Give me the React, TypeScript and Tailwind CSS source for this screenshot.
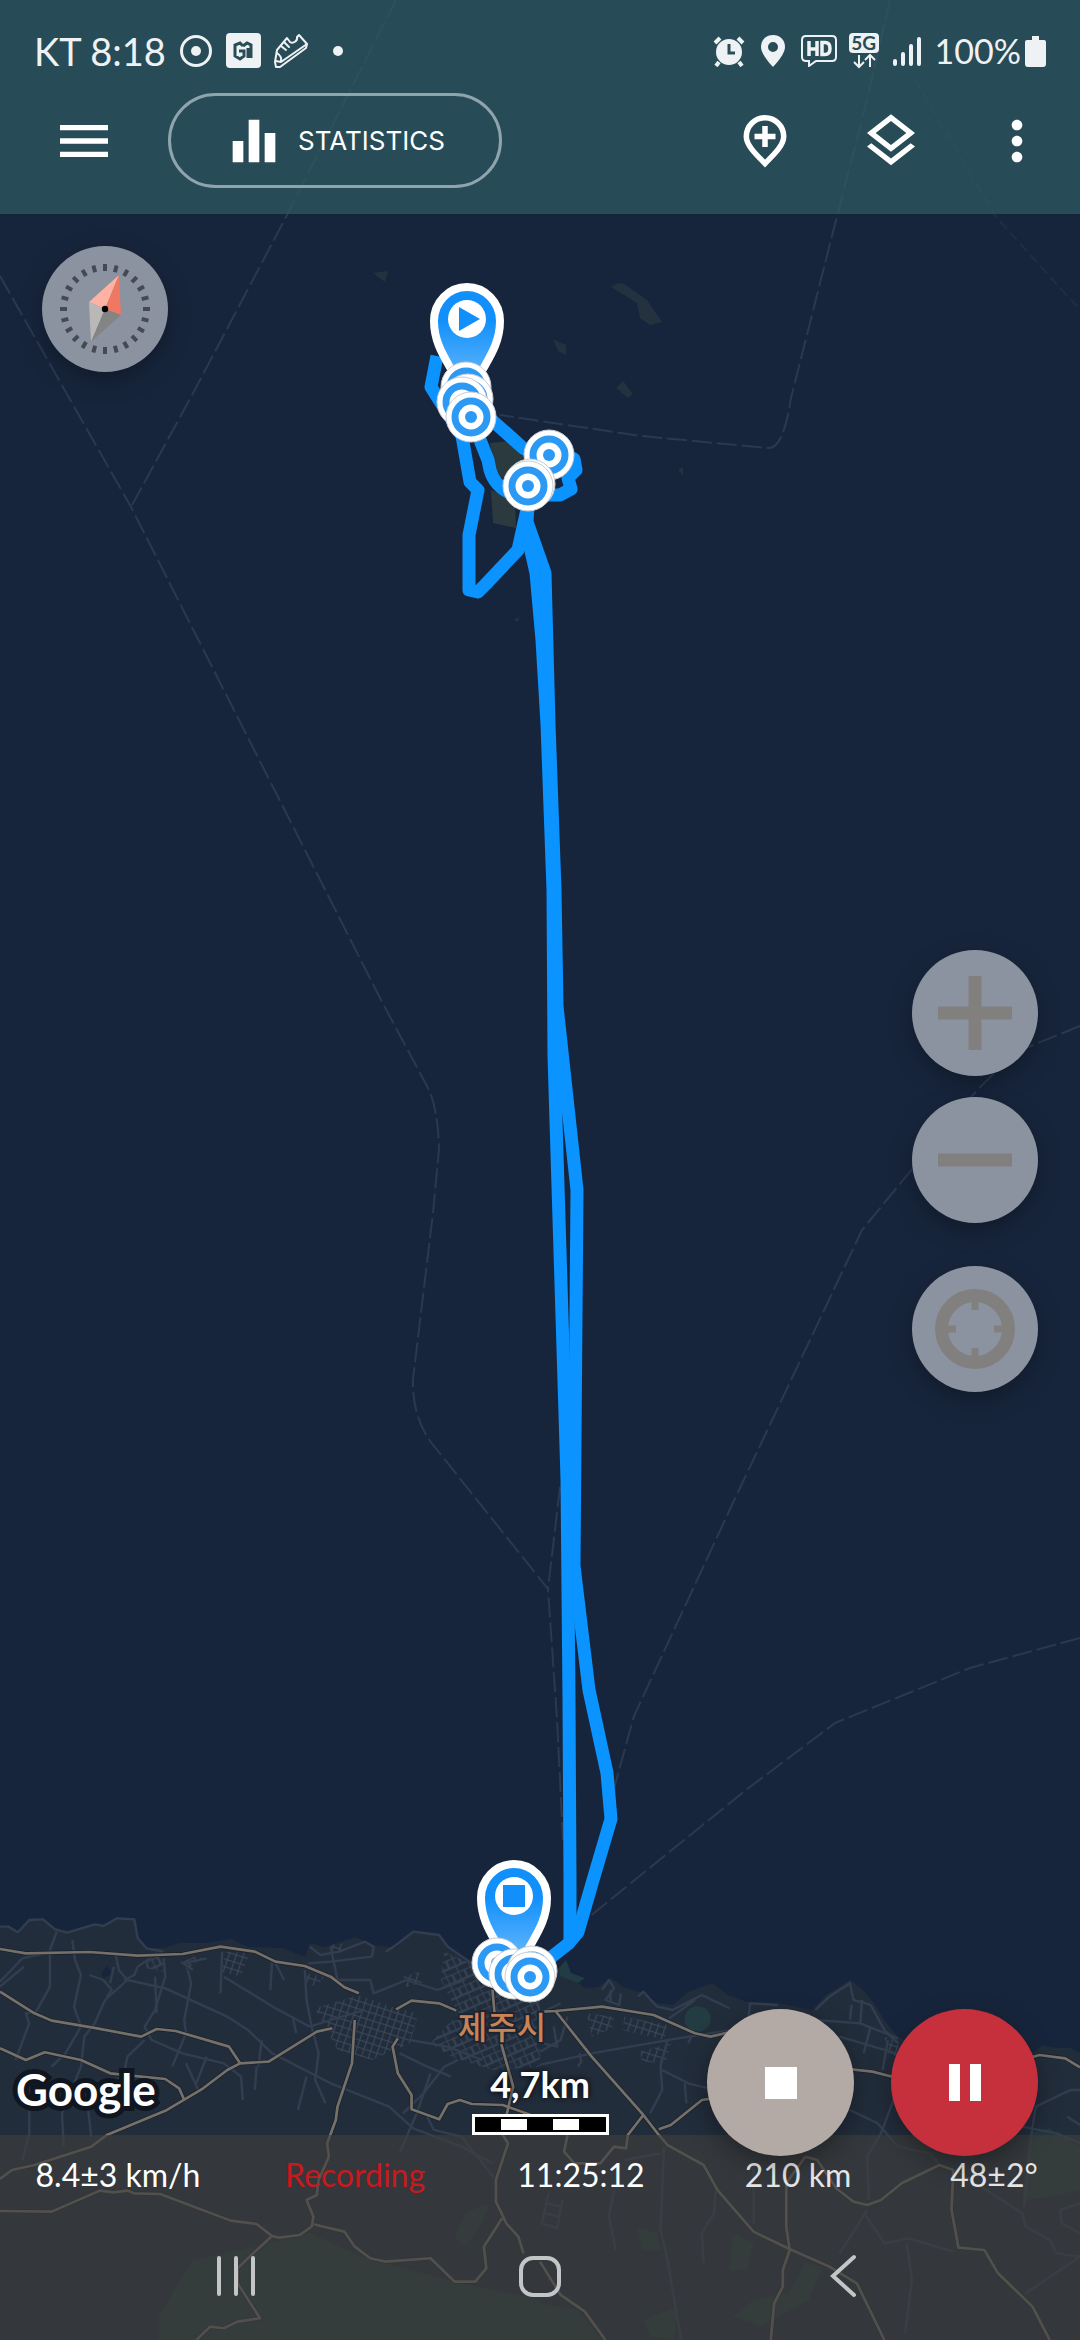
/**
 * Track recorder screen
 * Night map with the recorded route, floating map controls and live stats
 */

import React from 'react';
import { MdEqualizer, MdMenu, MdMoreVert, MdOutlineLayers } from 'react-icons/md';

const BOUNDARIES = [
  'M396 0 286 217 191 397 131 507',
  'M0 276 131 507 380 998 428 1088 Q438 1108 439 1149 L433 1213 413 1379 Q412 1415 430 1441 L548 1589 557 1719 563 1840',
  'M560 1487 548 1589',
  'M890 0 867 100 836 220 791 398 Q783 450 768 448 L641 436 500 415',
  'M1080 1026 1028 1047 Q1000 1065 973 1095 L862 1230 731 1507 634 1716 597 1850',
  'M1080 1638 970 1668 835 1723 746 1790 589 1917',
];

const ISLANDS = [
  'M611 287 618 283 624 284 647 300 662 322 650 325 640 318 637 303Z',
  'M553 339 566 345 566 355 558 351Z',
  'M616 388 623 381 633 394 628 398Z',
  'M373 273 388 271 385 282Z',
  'M678 470 683 467 683 475Z',
  'M514 620 519 617 518 622Z',
];

const TRACK = [
  'M437 356 431 387 462 436 470 482 478 490 469 535 469 590 478 592 485 585 518 550 528 505',
  'M480 440 488 460 490 470 Q495 487 512 494',
  'M485 414 523 448 549 460 M565 455 574 459 576 470 568 478 571 489 560 495 545 495',
  'M528 505 527 522 545 573 549 724 555 890 557 1006 577 1190 574 1566 589 1690 607 1773 611 1819 593 1880 578 1932 568 1944 545 1962',
  'M524 520 536 573 542 640 547 724 553 890 554 1056 567 1479 569 1700 570 1880 570 1940',
];

// Western half of the coast, drawn in its own tile units
const WEST_MAJOR = [
  'M0 207 75 220 260 216 400 227 530 222 640 200 740 215 800 245 885 258 960 290 1000 322 1042 340',
  'M0 335 100 400 150 422 270 443 410 470 455 447 510 453 665 500 697 550 780 545 920 455 965 445',
  'M0 505 75 540 130 517 235 540 320 580 410 590 480 597 520 625 535 660',
  'M697 550 660 570 590 625 485 690 310 765 265 800 100 855 35 870 0 897',
  'M0 993 150 995 290 932 330 937 370 932 390 940 465 942 670 1022 745 1032 790 1068',
  'M1030 420 1022 550 980 680 975 720 950 790 955 830 925 900 920 945 890 960 910 1010 905 1040 870 1065 810 1073 790 1068 735 1120 690 1165 690 1210 755 1315 690 1325 650 1345 610 1340 570 1380',
  'M910 1033 1000 1055 1030 1100 1075 1135 1120 1145 1250 1135 1320 1205 1380 1205 1412 1165 1405 1100 1458 1015',
  'M1150 388 1195 362 1275 370 1325 392 M1155 475 1140 500 1155 580 1195 645 1195 688 1275 718 1300 672 1335 660 1370 672 1460 675 1568 715',
  'M1430 330 1436 400 M1455 490 1490 620 1472 700 1460 765 1475 790 1440 900 1440 965 1470 1030 1505 1070 1520 1120',
];

const WEST_MINOR = [
  'M0 140 25 140 52 157 85 120 125 118 160 148 195 158 275 133 300 138 340 115 390 118 400 175 425 205 475 215',
  'M165 155 145 210 145 320 105 395 75 400 85 430 45 540',
  'M0 305 65 235 150 215 M0 320 70 260',
  'M210 180 218 240 235 285 215 380 235 440 190 520 150 560',
  'M335 220 345 270 370 300 305 360 275 430 245 470 235 560 180 700 185 800',
  'M370 300 480 325 660 410 720 450 790 520 960 610 1130 680 1200 745 1340 800 1430 850',
  'M260 285 300 300 325 330 310 350 M435 235 400 260 390 285 360 300',
  'M475 235 480 290 450 390 420 440 440 480 530 520 650 550 700 590 705 660',
  'M545 270 555 310 535 420 540 460 500 560 M530 250 600 235 M525 245 560 270',
  'M645 215 640 340 M650 290 800 385 900 440 M790 245 785 330 M800 250 825 300',
  'M885 270 890 360 905 440 925 520 915 600 945 670',
  'M420 480 370 530 360 580 300 640 255 680 265 770 M85 690 85 760 65 840',
  'M600 530 570 610 M540 550 580 640 M745 560 740 630 M890 590 865 690',
  'M900 200 930 225 985 215 1060 185 1085 200 1080 230 960 245 895 250',
  'M960 200 980 300 1075 300 1085 340 1180 300 1270 330 1350 300',
  'M1120 215 1150 195 1200 155 1275 165 1300 200 1370 250',
  'M900 440 960 420 1060 390 M1190 480 1300 500 1400 540',
  'M1250 580 1210 700 1160 820 M1240 710 1260 750 1340 770 1440 900',
  'M1170 700 1230 640 1290 560 1330 540 M1160 520 1240 560 1310 590',
  'M450 290 455 400 M320 310 330 260 M760 480 750 560 M850 410 860 460',
];

// Eastern half of the coast
const EAST_MAJOR = [
  'M10 395 45 393 180 380 330 405 450 460 495 470 545 458 M905 568 965 575 1040 595 M1400 540 1450 525 1525 535 1568 562',
  'M45 393 150 530 300 705 345 765 370 795 475 855 515 930 620 1055 720 1105 840 1160 920 1210 1000 1380',
  'M300 705 255 765 250 805 215 800 175 850 100 850 70 815 80 765',
  'M345 748 380 735 470 660 500 655 M770 830 805 840 860 925 910 965 950 975 990 960 1050 910 1160 855 1200 870 1195 990 1215 1103 1290 1110 1330 1180 1430 1280 1480 1380',
  'M770 830 715 910 715 1040 725 1110 705 1170 705 1220 680 1270 670 1380',
  'M0 1145 60 1245 130 1295 190 1380',
];

const EAST_MINOR = [
  'M0 555 150 520 400 475 560 450 M80 410 60 480 0 515 M0 400 60 370 M10 490 50 500 40 440',
  'M285 350 300 335 340 380 385 390 470 345 550 385 M375 415 450 360 M440 470 430 490',
  'M180 330 200 300 215 325 190 360 230 375 235 340 M205 330 205 370',
  'M800 390 840 350 900 310 910 360 960 375 1000 450 1040 490',
  'M800 420 930 430 1040 475 M870 470 1035 520 M935 360 930 430 M905 375 900 420 M960 440 940 520 M1010 480 995 570',
  'M605 420 610 370 690 375 M370 480 350 560 355 630 320 700 M355 570 430 610 490 625 M420 610 425 670',
  'M900 690 980 730 1040 800 1130 820 1160 855 M1030 650 990 760 950 830 955 960',
  'M1430 740 1440 680 1540 630 1568 630 M1400 740 1500 760 1568 790 M1430 740 1405 980',
  'M1530 710 1568 735 M1190 860 1400 1000 1410 1040 1480 1080 1500 1120 1568 1130 1410 1240',
  'M950 990 920 1040 870 1120 M945 1005 1000 1090 1070 1075 1200 1115 M1065 1090 1080 1200 1060 1360',
  'M350 820 245 840 M360 800 350 1050 370 1140 410 1380 M215 930 200 1010 220 1110',
  'M620 850 620 1030 M510 930 505 1000 470 1060 475 1150 M1568 970 1510 990 1515 1030 1568 1060',
  'M25 940 5 1030 50 1045 65 960 M20 970 60 980 M15 1000 55 1010 M110 560 120 545 115 520',
];

const DOTS = [
  [466, 387],
  [468, 399],
  [462, 402],
  [471, 417],
  [549, 455],
  [530, 484],
  [528, 486],
  [497, 1963],
  [514, 1974],
  [532, 1971],
  [530, 1977],
];

const Pin: React.FC<{ x: number; y: number; children: React.ReactNode }> = ({ x, y, children }) => (
  <g transform={`translate(${x} ${y})`}>
    <path
      d="M-33 0A33 34 0 0 1 33 0C33 20 24 34 16 48L2 76Q0 79 -2 76L-16 48C-24 34 -33 20 -33 0Z"
      fill="url(#pinFill)"
      stroke="#ffffff"
      strokeWidth="8"
    />
    <circle cy="-2" r="19" fill="#ffffff" />
    {children}
  </g>
);

const MapCanvas: React.FC = () => (
  <svg
    className="absolute inset-0 h-full w-full"
    viewBox="0 0 1080 2340"
    preserveAspectRatio="xMidYMid slice"
    fill="none"
    aria-hidden="true"
  >
    <defs>
      <linearGradient id="pinFill" x1="0" y1="0" x2="0" y2="1">
        <stop offset="0.3" stopColor="#1190fb" />
        <stop offset="0.75" stopColor="#55b0fb" />
      </linearGradient>
      <pattern id="blocks" width="20" height="22" patternUnits="userSpaceOnUse" patternTransform="rotate(18)">
        <path d="M0 0H20M0 0V22" stroke="#3a4557" strokeWidth="7" />
      </pattern>
      <pattern id="blocksWide" width="38" height="44" patternUnits="userSpaceOnUse" patternTransform="rotate(-24)">
        <path d="M0 0H38M0 0V44M20 0V26M0 26H38" stroke="#354153" strokeWidth="7" />
      </pattern>
    </defs>

    {/* Coast */}
    <path
      d="M0 1927 9 1927 18 1932 29 1920 43 1919 55 1929 67 1933 95 1924 103 1926 117 1918 134 1919 138 1938 146 1948 165 1948 179 1943 207 1943 231 1939 248 1947 282 1948 305 1957 310 1943 324 1947 356 1937 372 1945 396 1948 413 1931 439 1935 448 1948 475 1967 540 1975 559 1968 585 1988 598 1987 611 1978 623 1987 643 1993 657 2003 673 2005 688 1992 712 1983 728 1995 747 2002 778 2003 812 2010 826 1995 850 1980 860 1987 874 2003 884 2020 898 2037 919 2047 1032 2053 1043 2045 1056 2048 1070 2048 1080 2053V2340H0Z"
      fill="#222d3b"
    />
    {ISLANDS.map(d => <path key={d} d={d} fill="#24313f" />)}
    <path d="M490 443 510 441 524 456 510 482 496 474Z" fill="#2a3a3f" />
    <path d="M491 490 515 500 516 528 493 523Z" fill="#2a3a3f" />
    <path d="M559 1968 566 1960 571 1973 585 1978 578 1983 560 1976Z" fill="#213c44" />

    {BOUNDARIES.map(d => (
      <path key={d} d={d} stroke="#2b394e" strokeWidth="2" strokeDasharray="20 5" />
    ))}
    <path d="M915 80 996 217 1080 310" stroke="#202e44" strokeWidth="2" strokeDasharray="10 5" />

    {/* West tile */}
    <g transform="translate(0 1880) scale(0.3444 0.3333)" strokeLinejoin="round">
      <path d="M560 1140 700 1110 900 1060 1050 1130 1300 1200 1568 1260V1380H460V1310Z" fill="#24383b" />
      <path d="M1320 1070 1350 1000 1420 970 1400 1030 1350 1100Z" fill="#24383b" />
      <path d="M295 280 310 258 330 280 300 295Z" fill="#17253c" />
      <path d="M915 385 1040 345 1150 385 1215 400 1190 490 1080 540 980 510Z" fill="url(#blocks)" />
      <path d="M1290 215 1390 260 1568 330 1568 560 1430 570 1310 530 1250 490 1330 400 1280 300Z" fill="url(#blocksWide)" />
      <path d="M655 215 725 220 700 290 640 275Z" fill="url(#blocks)" />
      <path d="M1170 290 1215 275 1225 310 1180 320Z M960 195 1000 190 1000 220 965 215Z M890 280 940 290 920 320 890 310Z" fill="url(#blocks)" />
      <path d="M420 225 480 235 475 275 425 265Z M530 225 590 235 540 270Z" fill="url(#blocksWide)" />
      {WEST_MINOR.map(d => <path key={d} d={d} stroke="#323e50" strokeWidth="7" />)}
      {WEST_MAJOR.map(d => <path key={d} d={d} stroke="#191f29" strokeWidth="12" />)}
      {WEST_MAJOR.map(d => <path key={d} d={d} stroke="#75706a" strokeWidth="8" />)}
    </g>

    {/* East tile */}
    <g transform="translate(540 1880) scale(0.3444 0.3333)" strokeLinejoin="round">
      <path d="M1420 760 1480 745 1568 800V930L1480 950 1400 960Z M560 1060 620 1090 600 1170 550 1170Z M770 1150 820 1160 780 1260 640 1340 560 1310 620 1260 720 1240Z M300 1320 400 1280 390 1380 320 1370Z M280 1040 340 1060 350 1110 300 1110Z" fill="#24383b" />
      <path d="M0 1270 110 1290 180 1380H0Z" fill="#24383b" />
      <circle cx="458" cy="417" r="38" fill="#233c42" />
      <path d="M135 400 215 410 210 445 150 470Z M245 410 370 435 360 480 240 450Z M290 515 380 490 365 550 295 545Z" fill="url(#blocks)" />
      <path d="M1000 470 1040 480 1040 530 1010 520Z" fill="url(#blocks)" />
      {EAST_MINOR.map(d => <path key={d} d={d} stroke="#323e50" strokeWidth="7" />)}
      {EAST_MAJOR.map(d => <path key={d} d={d} stroke="#191f29" strokeWidth="12" />)}
      {EAST_MAJOR.map(d => <path key={d} d={d} stroke="#75706a" strokeWidth="8" />)}
    </g>

    <text
      x="502"
      y="2039"
      textAnchor="middle"
      className="font-['Noto_Sans_CJK_KR',sans-serif] text-[32px] font-medium"
      fill="#c98355"
      stroke="#1c2431"
      strokeWidth="4"
      paintOrder="stroke"
    >
      제주시
    </text>

    {/* Recorded route */}
    {TRACK.map(d => (
      <path key={d} d={d} stroke="#0b93ff" strokeWidth="13" strokeLinejoin="round" />
    ))}

    <Pin x={467} y={321}>
      <path d="M-8 -14 13 -2 -8 10Z" fill="#1190fb" />
    </Pin>
    <Pin x={514} y={1898}>
      <path d="M-11 -13H11V9H-11Z" fill="#1190fb" />
    </Pin>
    {DOTS.map(([x, y]) => (
      <g key={`${x}-${y}`}>
        <circle cx={x} cy={y} r="25" fill="#ffffff" stroke="#c9ccd4" />
        <circle cx={x} cy={y} r="16" stroke="#2c99f5" strokeWidth="7" />
        <circle cx={x} cy={y} r="6" fill="#2c99f5" />
      </g>
    ))}
  </svg>
);

const StatusBar: React.FC = () => (
  <div className="flex h-[93px] items-center justify-between px-[34px] pt-2 text-[#eef2f4]">
    <div className="flex items-center">
      <span className="text-[38px] leading-none">KT 8:18</span>
      <svg className="ml-3 h-9 w-9" viewBox="0 0 36 36" fill="none">
        <circle cx="18" cy="18" r="14.5" stroke="currentColor" strokeWidth="3" />
        <circle cx="18" cy="18" r="5" fill="currentColor" />
      </svg>
      <span className="ml-3 flex h-[35px] w-[35px] items-center justify-center rounded-sm bg-[#eef2f4]">
        <svg className="h-5 w-5" viewBox="0 0 20 20" fill="none" stroke="#294c57" strokeWidth="3">
          <path d="M10 5 7 2 2 4V15L7 18 11 15V10H6M10 5 14 2 18 4V17M15 7V17" />
        </svg>
      </span>
      <svg className="ml-3 h-9 w-9" viewBox="0 0 36 36" fill="none" stroke="currentColor" strokeWidth="2" strokeLinejoin="round" strokeLinecap="round">
        <path d="M26 2 34 11 33 15 7 34H3L2 29 4 17 14 5 17 9C20 11 25 8 24 4Z" />
        <path d="M3 28 8 29 34 11M4 20C7 22 9 25 8 29M8 13 13 17M11 9 16 14" />
      </svg>
      <span className="ml-6 h-[10px] w-[10px] rounded-full bg-current" />
    </div>

    <div className="flex items-center">
      <svg className="h-8 w-8" viewBox="0 0 32 32" fill="none">
        <circle cx="16" cy="17" r="13" fill="currentColor" />
        <path d="M2 8 7 3M30 8 25 3M6 27 3 31M26 27 29 31" stroke="currentColor" strokeWidth="4" />
        <path d="M16 9V18H22" stroke="#294c57" strokeWidth="3" />
      </svg>
      <svg className="ml-3 h-8 w-8" viewBox="0 0 32 32">
        <path d="M16 0C8 0 4 6 4 12C4 20 16 32 16 32S28 20 28 12C28 6 24 0 16 0ZM16 17A5 5 0 1 1 16 7A5 5 0 0 1 16 17Z" fill="currentColor" />
      </svg>
      <svg className="ml-3 h-8 w-9" viewBox="0 0 36 32" fill="none" stroke="currentColor">
        <path d="M5 1H31Q35 1 35 5V22Q35 26 31 26H15L8 31V26H5Q1 26 1 22V5Q1 1 5 1Z" strokeWidth="2" />
        <path d="M8 6V21M16 6V21M8 14H16M21 7.5V19.5H24Q29 19.5 29 13.5Q29 7.5 24 7.5Z" strokeWidth="3.5" />
      </svg>
      <span className="ml-3 flex flex-col items-center">
        <span className="flex h-5 w-[30px] items-center justify-center rounded-sm bg-[#eef2f4] text-[19px] leading-none font-bold text-[#294c57]">5G</span>
        <svg className="h-4 w-6" viewBox="0 0 24 16" fill="none" stroke="currentColor" strokeWidth="2">
          <path d="M7 2V14M2 9 7 14 12 9M18 14V2M13 7 18 2 23 7" />
        </svg>
      </span>
      <svg className="ml-3 h-8 w-8" viewBox="0 0 32 32" stroke="currentColor" strokeWidth="4" strokeLinecap="round">
        <path d="M4 26V29M12 19V29M20 11V29M28 4V29" />
      </svg>
      <span className="ml-3 text-[34px] leading-none">100%</span>
      <svg className="ml-1 h-8 w-[21px]" viewBox="0 0 21 32">
        <path d="M7 1H14V5H19Q21 5 21 7V29Q21 32 18 32H3Q0 32 0 29V7Q0 5 2 5H7Z" fill="currentColor" />
      </svg>
    </div>
  </div>
);

const Toolbar: React.FC = () => (
  <div className="flex h-[95px] items-center text-white">
    <button type="button" aria-label="Menu" className="flex w-[168px] justify-center">
      <MdMenu className="h-16 w-16" />
    </button>
    <button
      type="button"
      className="flex h-[95px] items-center gap-3 rounded-full border-[3px] border-[#8fa5ad] pr-[54px] pl-[51px] font-[Inter,sans-serif] text-[26px]"
    >
      <MdEqualizer className="h-16 w-16" />
      STATISTICS
    </button>
    <div className="ml-auto flex">
      <button type="button" aria-label="Add waypoint" className="flex w-[126px] justify-center">
        <svg className="h-16 w-16" viewBox="0 0 64 64" fill="none" stroke="currentColor" strokeWidth="5.5">
          <path d="M32 54.5C22 44.5 13.3 36 13.3 27.5A18.7 18.7 0 0 1 50.7 27.5C50.7 36 42 44.5 32 54.5Z" />
          <path d="M32 17V38M21.5 27.5H42.5" />
        </svg>
      </button>
      <button type="button" aria-label="Map layers" className="flex w-[126px] justify-center">
        <MdOutlineLayers className="h-16 w-16" />
      </button>
      <button type="button" aria-label="More options" className="flex w-[126px] justify-center">
        <MdMoreVert className="h-16 w-16" />
      </button>
    </div>
  </div>
);

const TICKS = Array.from({ length: 24 }, (_, i) => i * 15);

const RoundButton: React.FC<{ label: string; className?: string; children: React.ReactNode }> = ({
  label,
  className = '',
  children,
}) => (
  <button
    type="button"
    aria-label={label}
    className={`h-[126px] w-[126px] rounded-full bg-[#8b93a0] shadow-[0_8px_24px_rgba(0,0,0,0.3)] ${className}`}
  >
    <svg className="h-full w-full" viewBox="-63 -63 126 126" fill="none">
      {children}
    </svg>
  </button>
);

const STATS = [
  { value: '8.4±3 km/h', className: 'text-white' },
  { value: 'Recording', className: 'text-[#c8191d]' },
  { value: '11:25:12', className: 'text-white' },
  { value: '210 km', className: 'text-[#e6e6e6]' },
  { value: '48±2°', className: 'text-[#e6e6e6]' },
];

const App: React.FC = () => (
  <div className="relative flex min-h-screen flex-col overflow-hidden bg-[#17253c] font-[Lato,sans-serif]">
    <MapCanvas />

    <header className="relative bg-[#2f5960]/75 pb-[26px]">
      <StatusBar />
      <Toolbar />
    </header>

    <main className="relative flex flex-1 flex-col px-[42px] pt-8">
      <RoundButton label="Compass">
        {TICKS.map(deg => (
          <path key={deg} d="M0 -45V-38" stroke="#454a52" strokeWidth="4" transform={`rotate(${deg})`} />
        ))}
        <path d="M14 -34 -16 -7 0 0Z" fill="#ffb1a3" />
        <path d="M14 -34 16 6 0 0Z" fill="#ee7862" />
        <path d="M-14 33 -16 -7 0 0Z" fill="#b9b8b6" />
        <path d="M-14 33 16 6 0 0Z" fill="#848484" />
        <circle r="3.2" fill="#000000" />
      </RoundButton>

      <div className="flex flex-1 flex-col items-end justify-center pb-10">
        <RoundButton label="Zoom in">
          <path d="M0 -37V37M-37 0H37" stroke="#81807e" strokeWidth="13" />
        </RoundButton>
        <RoundButton label="Zoom out" className="mt-[21px]">
          <path d="M-37 0H37" stroke="#81807e" strokeWidth="13" />
        </RoundButton>
        <RoundButton label="My location" className="mt-[43px]">
          <circle r="33.5" stroke="#81807e" strokeWidth="13" />
          <path d="M0 -28V-19M0 28V19M-28 0H-19M28 0H19" stroke="#81807e" strokeWidth="7" />
        </RoundButton>
      </div>
    </main>

    {/* Map attribution, scale and recording controls */}
    <div className="relative z-10 grid grid-cols-[1fr_auto_1fr] items-end">
      <span className="pb-6 pl-4 text-[44px] leading-none font-bold text-white [-webkit-text-stroke:10px_#10161f] [paint-order:stroke_fill]">
        Google
      </span>
      <div className="flex w-[137px] flex-col items-center gap-3 text-white">
        <span className="text-[36px] leading-none font-bold [text-shadow:0_0_6px_#000]">4,7km</span>
        <div className="flex h-[21px] w-full border-[3px] border-white bg-black py-[2px]">
          <span className="flex-1" />
          <span className="flex-1 bg-white" />
          <span className="flex-1" />
          <span className="flex-1 bg-white" />
          <span className="flex-1" />
        </div>
      </div>
      <div className="-mb-[21px] flex justify-end gap-[37px] pr-[42px]">
        <button
          type="button"
          aria-label="Stop recording"
          className="flex h-[147px] w-[147px] items-center justify-center rounded-full bg-[#b3aaa5] shadow-[0_8px_24px_rgba(0,0,0,0.35)]"
        >
          <span className="h-8 w-8 bg-white" />
        </button>
        <button
          type="button"
          aria-label="Pause recording"
          className="flex h-[147px] w-[147px] items-center justify-center gap-[10px] rounded-full bg-[#c6303c] shadow-[0_8px_24px_rgba(0,0,0,0.35)]"
        >
          <span className="h-[37px] w-[11px] bg-white" />
          <span className="h-[37px] w-[11px] bg-white" />
        </button>
      </div>
    </div>

    <footer className="relative bg-[#3f3f3d]/65">
      <div className="grid h-20 grid-cols-[236fr_238fr_214fr_220fr_172fr] items-center text-center text-[32px] leading-none">
        {STATS.map(stat => (
          <span key={stat.value} className={stat.className}>{stat.value}</span>
        ))}
      </div>
      <nav className="grid h-[125px] grid-cols-3 items-center px-[84px] pb-1 text-[#c3c5c6]">
        <button type="button" aria-label="Recent apps" className="flex justify-center">
          <svg className="h-11 w-11" viewBox="0 0 44 44" stroke="currentColor" strokeWidth="4" strokeLinecap="round">
            <path d="M5 4V40M22 4V40M39 4V40" />
          </svg>
        </button>
        <button type="button" aria-label="Home" className="flex justify-center">
          <svg className="h-11 w-11" viewBox="0 0 44 44" fill="none" stroke="currentColor" strokeWidth="4">
            <rect x="3" y="4" width="38" height="37" rx="12" />
          </svg>
        </button>
        <button type="button" aria-label="Back" className="flex justify-center">
          <svg className="h-11 w-11" viewBox="0 0 44 44" fill="none" stroke="currentColor" strokeWidth="4" strokeLinecap="round">
            <path d="M32 3 11 22 32 41" />
          </svg>
        </button>
      </nav>
    </footer>
  </div>
);

export default App;
